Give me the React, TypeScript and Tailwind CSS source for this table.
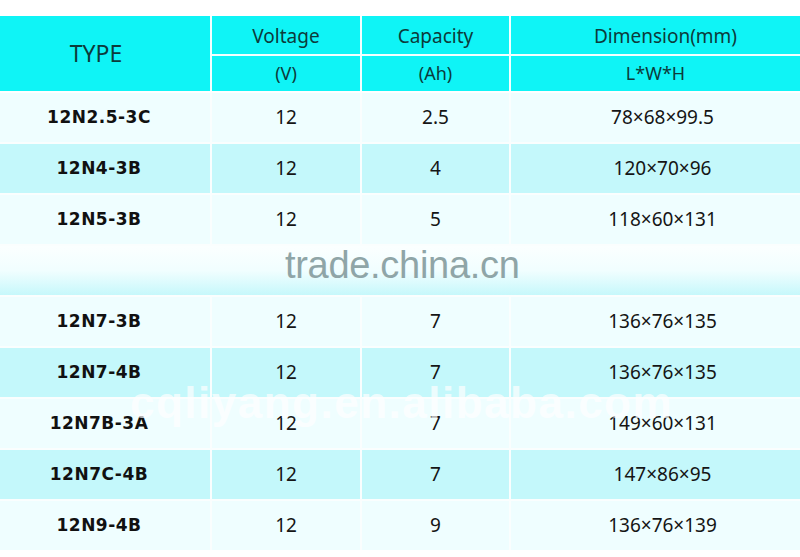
import React from 'react';

interface Row {
  type: string;
  voltage: string;
  capacity: string;
  dim: string;
}

const rows: (Row | null)[] = [
  { type: '12N2.5-3C', voltage: '12', capacity: '2.5', dim: '78×68×99.5' },
  { type: '12N4-3B', voltage: '12', capacity: '4', dim: '120×70×96' },
  { type: '12N5-3B', voltage: '12', capacity: '5', dim: '118×60×131' },
  null,
  { type: '12N7-3B', voltage: '12', capacity: '7', dim: '136×76×135' },
  { type: '12N7-4B', voltage: '12', capacity: '7', dim: '136×76×135' },
  { type: '12N7B-3A', voltage: '12', capacity: '7', dim: '149×60×131' },
  { type: '12N7C-4B', voltage: '12', capacity: '7', dim: '147×86×95' },
  { type: '12N9-4B', voltage: '12', capacity: '9', dim: '136×76×139' },
];

const cols = 'grid grid-cols-[210px_148px_147px_1fr] gap-x-[2px]';

export default function App() {
  return (
    <div className="relative w-[800px] h-[557px] overflow-hidden bg-white font-['Noto_Sans','Open_Sans',sans-serif] text-[#151515]">
      <div className="h-[16px]" />

      {/* header */}
      <div className={`${cols} h-[75px] bg-[#f4ffff]`}>
        <div className="flex items-center justify-center bg-[#0ff4f6] text-[23px] text-[#0c3b3b] pr-[18px]">
          TYPE
        </div>
        {[
          ['Voltage', '(V)', ''],
          ['Capacity', '(Ah)', ''],
          ['Dimension(mm)', 'L*W*H', 'pl-[20px]'],
        ].map(([a, b, pad]) => (
          <div key={a} className="flex flex-col gap-[2px]">
            <div className={`flex-1 flex items-center justify-center bg-[#0ff4f6] text-[19px] text-[#0c3b3b] pt-[2px] ${pad}`}>
              {a}
            </div>
            <div className="flex-1 flex items-center justify-center bg-[#0ff4f6] text-[18px] text-[#0c3b3b]">
              {b}
            </div>
          </div>
        ))}
      </div>

      {/* body */}
      <div className="flex flex-col gap-[2px] mt-[2px] bg-[#fafefe]">
        {rows.map((r, i) =>
          r === null ? (
            <div key={i} className="h-[49px] bg-gradient-to-b from-[#fbffff] via-[#f1feff] to-[#c6f8fb]" />
          ) : (
            <div key={i} className={`${cols} h-[49px]`}>
              {[r.type, r.voltage, r.capacity, r.dim].map((v, j) => (
                <div
                  key={j}
                  className={`flex items-center justify-center ${
                    i % 2 === 1 ? 'bg-[#c4f8fb]' : 'bg-[#effeff]'
                  } ${
                    j === 0
                      ? "font-['DejaVu_Sans',sans-serif] font-bold text-[17px] tracking-[0.5px] text-[#111] pr-[12px]"
                      : 'text-[19px]'
                  } ${j === 3 ? 'pl-[14px]' : ''}`}
                >
                  {v}
                </div>
              ))}
            </div>
          )
        )}
      </div>

      {/* watermarks */}
      <div className="absolute left-[285px] top-[246px] text-[38px] leading-none text-[#8fa5a7] font-['Liberation_Sans',sans-serif] tracking-[-0.3px]">
        trade.china.cn
      </div>
      <div className="absolute left-[130px] top-[381px] text-[44px] leading-none font-bold text-white/70 font-['Liberation_Sans',sans-serif] tracking-[1.5px]">
        cqliyang.en.alibaba.com
      </div>
    </div>
  );
}
